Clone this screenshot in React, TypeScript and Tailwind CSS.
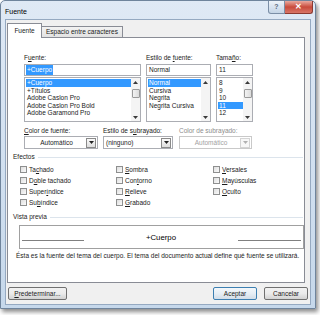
import React from "react";

const fontsList = ["+Cuerpo", "+Títulos", "Adobe Caslon Pro", "Adobe Caslon Pro Bold", "Adobe Garamond Pro"];
const styles = ["Normal", "Cursiva", "Negrita", "Negrita Cursiva"];
const sizes = ["8", "9", "10", "11", "12"];

function Tri({ up, color = "#3a3a3a" }: { up?: boolean; color?: string }) {
  return (
    <svg width="5" height="3" viewBox="0 0 5 3" className="block">
      <path d={up ? "M0 3L2.5 0L5 3Z" : "M0 0L5 0L2.5 3Z"} fill={color} />
    </svg>
  );
}

function ScrollBar({ thumb }: { thumb?: boolean }) {
  return (
    <div className="flex h-full w-[9px] flex-col bg-[#f4f4f4]">
      <div className="flex h-[8px] items-center justify-center">
        <Tri up />
      </div>
      <div className="flex-1">
        {thumb && (
          <div className="mx-[0.5px] mt-[3px] h-[9px] rounded-[1px] border border-[#9a9a9a] bg-gradient-to-r from-[#f3f3f3] to-[#dcdcdc]" />
        )}
      </div>
      <div className="flex h-[8px] items-center justify-center">
        <Tri />
      </div>
    </div>
  );
}

function ListBox({ items, selected, thumb }: { items: string[]; selected: number; thumb?: boolean }) {
  return (
    <div className="flex h-[45px] border border-[#abadb3] bg-white">
      <div className="flex-1 overflow-hidden pt-[1px] pl-[1px]">
        {items.map((it, i) => (
          <div
            key={it}
            className={
              "h-[7.5px] pl-[1px] leading-[7.5px] whitespace-nowrap " +
              (i === selected ? "bg-[#3399ff] text-white" : "")
            }
          >
            {it}
          </div>
        ))}
      </div>
      <ScrollBar thumb={thumb} />
    </div>
  );
}

function Combo({ text, center, disabled }: { text: string; center?: boolean; disabled?: boolean }) {
  return (
    <div
      className={
        "flex h-[13px] items-center border bg-white " +
        (disabled ? "border-[#c9c9c9] text-[#a2a2a2]" : "border-[#abadb3]")
      }
    >
      <div className={"flex-1 pl-[2px] " + (center ? "text-center" : "")}>{text}</div>
      <div
        className={
          "mr-[1px] flex h-[10px] w-[10px] items-center justify-center border " +
          (disabled ? "border-[#d4d4d4] bg-[#f7f7f7]" : "border-[#8a8a8a] bg-gradient-to-b from-[#fafafa] to-[#dedede]")
        }
      >
        <Tri color={disabled ? "#b0b0b0" : "#222"} />
      </div>
    </div>
  );
}

function Group({ title }: { title: string }) {
  return (
    <div className="flex h-[8px] items-center pl-[5px] pr-[1px] leading-[8px]">
      <span className="pr-[3px]">{title}</span>
      <div className="h-px flex-1 bg-[#dce4ec]" />
    </div>
  );
}

function Check({ label, u }: { label: string; u?: number }) {
  return (
    <div className="flex h-[11px] items-center">
      <div className="h-[7px] w-[7px] border border-[#8e8f8f] bg-gradient-to-br from-[#dedede] to-[#fbfbfb]" />
      <span className="pl-[2px] whitespace-nowrap">
        {u === undefined ? (
          label
        ) : (
          <>
            {label.slice(0, u)}
            <span className="underline">{label[u]}</span>
            {label.slice(u + 1)}
          </>
        )}
      </span>
    </div>
  );
}

function Btn({ label, w, primary }: { label: React.ReactNode; w: string; primary?: boolean }) {
  return (
    <div
      className={
        "flex h-[13px] items-center justify-center rounded-[2px] border " +
        w +
        " " +
        (primary
          ? "border-[#3c7fb1] bg-gradient-to-b from-[#f4f8fb] via-[#e6eef5] to-[#d2dde8]"
          : "border-[#707070] bg-gradient-to-b from-[#f2f2f2] via-[#ebebeb] to-[#d2d2d2]")
      }
    >
      {label}
    </div>
  );
}

export default function App() {
  return (
    <div className="h-[315px] w-[320px] bg-white font-['Liberation_Sans',Arial,sans-serif] text-[6.5px] text-[#1b1b1b]">
      <div className="flex h-[309px] w-[316px] flex-col rounded-t-[5px] border border-[#6f849c] bg-gradient-to-b from-[#dfe9f5] to-[#c6d8eb] shadow-[2px_3px_4px_rgba(0,0,0,0.45)]">
        {/* title bar */}
        <div className="flex h-[18px] items-start justify-between">
          <div className="pt-[6px] pl-[4px] text-[7px] text-black">Fuente</div>
          <div className="mr-[2px] flex">
            <div className="flex h-[13px] w-[17px] items-center justify-center rounded-bl-[3px] border border-t-0 border-[#7b8ea6] bg-gradient-to-b from-[#eef3f9] to-[#c4d4e6] text-[7px] font-bold text-[#5a6b80]">
              ?
            </div>
            <div className="flex h-[13px] w-[28px] items-center justify-center rounded-br-[3px] border border-t-0 border-l-0 border-[#8b3a31] bg-gradient-to-b from-[#e8a99f] via-[#c84a3b] to-[#d87567] text-[8px] font-bold text-white">
              ✕
            </div>
          </div>
        </div>

        {/* client area */}
        <div className="mx-[4px] flex h-[286px] flex-col border border-[#95a9c1] bg-[#f0f0f0]">
          {/* tabs */}
          <div className="mt-[3px] ml-[1px] flex h-[14px] items-end">
            <div className="relative z-10 -mb-px flex h-[15px] w-[35px] items-center justify-center border border-b-0 border-[#898c95] bg-white">
              Fuente
            </div>
            <div className="flex h-[11px] items-center border border-b-0 border-l-0 border-[#898c95] bg-gradient-to-b from-[#f3f3f3] to-[#e2e2e2] px-[4px]">
              Espacio entre caracteres
            </div>
          </div>

          {/* panel */}
          <div className="ml-[1px] h-[246px] w-[298px] border border-[#898c95] bg-white">
            <div className="flex gap-[5px] pt-[16px] pl-[16px]">
              <div className="w-[117px]">
                <div className="mb-[2px] h-[8px] leading-[8px]">
                  F<span className="underline">u</span>ente:
                </div>
                <div className="mb-px flex h-[12px] items-center border border-[#abadb3] bg-white pl-[1px]">
                  <span className="bg-[#3399ff] px-[1px] text-white">+Cuerpo</span>
                </div>
                <ListBox items={fontsList} selected={0} thumb />
              </div>
              <div className="w-[65px]">
                <div className="mb-[2px] h-[8px] leading-[8px]">
                  Estilo de <span className="underline">f</span>uente:
                </div>
                <div className="mb-px flex h-[12px] items-center border border-[#abadb3] bg-white pl-[2px]">Normal</div>
                <ListBox items={styles} selected={0} />
              </div>
              <div className="w-[37px]">
                <div className="mb-[2px] h-[8px] leading-[8px]">
                  Tama<span className="underline">ñ</span>o:
                </div>
                <div className="mb-px flex h-[12px] items-center border border-[#abadb3] bg-white pl-[2px]">11</div>
                <ListBox items={sizes} selected={3} thumb />
              </div>
            </div>

            <div className="mt-[5px] flex pl-[16px]">
              <div className="w-[74px]">
                <div className="mb-px h-[8px] leading-[8px]">
                  <span className="underline">C</span>olor de fuente:
                </div>
                <Combo text="Automático" center />
              </div>
              <div className="ml-[5px] w-[70px]">
                <div className="mb-px h-[8px] leading-[8px]">
                  Estilo de s<span className="underline">u</span>brayado:
                </div>
                <Combo text="(ninguno)" />
              </div>
              <div className="ml-[6px] w-[73px]">
                <div className="mb-px h-[8px] leading-[8px] text-[#8d8d8d]">Color de subrayado:</div>
                <Combo text="Automático" center disabled />
              </div>
            </div>

            <div className="mt-[4px]">
              <Group title="Efectos" />
            </div>
            <div className="mt-[3px] flex pl-[12px]">
              <div className="w-[96px]">
                <Check label="Tachado" u={2} />
                <Check label="Doble tachado" u={1} />
                <Check label="Superíndice" u={5} />
                <Check label="Subíndice" u={2} />
              </div>
              <div className="w-[97px]">
                <Check label="Sombra" u={0} />
                <Check label="Contorno" u={3} />
                <Check label="Relieve" u={0} />
                <Check label="Grabado" u={0} />
              </div>
              <div>
                <Check label="Versales" u={0} />
                <Check label="Mayúsculas" u={0} />
                <Check label="Oculto" u={0} />
              </div>
            </div>

            <div className="mt-[5px]">
              <Group title="Vista previa" />
            </div>
            <div className="mt-[4px] ml-[11px] flex h-[24px] w-[285px] items-center border border-[#a0a0a0] bg-white px-[2px]">
              <div className="mt-[6px] h-px w-[62px] bg-[#808080]" />
              <div className="flex-1 pt-[1px] text-center text-[7.8px] text-black">+Cuerpo</div>
              <div className="mt-[6px] h-px w-[63px] bg-[#808080]" />
            </div>
            <div className="mt-[3px] pl-[8px] leading-[8px] whitespace-nowrap">
              Ésta es la fuente del tema del cuerpo. El tema del documento actual define qué fuente se utilizará.
            </div>
          </div>

          {/* buttons */}
          <div className="mt-[4px] flex items-center pr-[2px] pl-[2px]">
            <Btn
              w="w-[59px]"
              label={
                <span>
                  <span className="underline">P</span>redeterminar...
                </span>
              }
            />
            <div className="flex-1" />
            <Btn w="w-[44px]" label="Aceptar" primary />
            <div className="w-[7px]" />
            <Btn w="w-[44px]" label="Cancelar" />
          </div>
        </div>
      </div>
    </div>
  );
}
